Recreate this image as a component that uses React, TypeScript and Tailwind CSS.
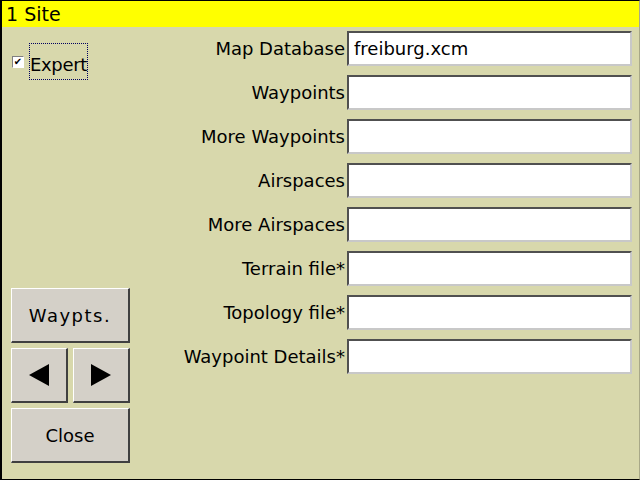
import React from "react"

const font = { fontFamily: '"DejaVu Sans", sans-serif' }

const fields = [
  { label: "Map Database", value: "freiburg.xcm" },
  { label: "Waypoints", value: "" },
  { label: "More Waypoints", value: "" },
  { label: "Airspaces", value: "" },
  { label: "More Airspaces", value: "" },
  { label: "Terrain file*", value: "" },
  { label: "Topology file*", value: "" },
  { label: "Waypoint Details*", value: "" },
]

function Btn({ children, className = "" }: { children: React.ReactNode; className?: string }) {
  return (
    <div
      className={`flex items-center justify-center bg-[#d4d0c8] border-t border-l border-t-white border-l-white border-b-2 border-r-2 border-b-[#404040] border-r-[#404040] text-[18px] text-black ${className}`}
    >
      {children}
    </div>
  )
}

export default function App() {
  return (
    <div className="w-[640px] h-[480px] flex flex-col bg-[#d8d8ac] border-l-2 border-t border-b border-black border-r border-r-[#a8a888] overflow-hidden" style={font}>
      {/* Title */}
      <div className="h-[26px] bg-[#ffff00] flex items-center pl-[4px] text-[19px] text-black leading-none shrink-0">
        1 Site
      </div>

      <div className="flex flex-1">
        {/* Left column */}
        <div className="w-[140px] flex flex-col pl-[9px] pt-[16px] pb-[16px]">
          <div className="flex items-center">
            <div className="w-[12px] h-[12px] bg-white border border-t-[#808080] border-l-[#808080] border-b-white border-r-white flex items-center justify-center text-[10px] font-bold leading-none ml-[1px]">
              ✔
            </div>
            <div className="ml-[5px] h-[37px] w-[59px] pt-[6px] flex items-center justify-center border border-dotted border-[#000060] text-[18px] tracking-[-0.3px] text-black">
              Expert
            </div>
          </div>

          <div className="flex-1" />

          <div className="flex flex-col gap-[5px] w-[119px]">
            <Btn className="h-[55px] tracking-[1.5px]">Waypts.</Btn>
            <div className="flex gap-[5px]">
              <Btn className="h-[55px] flex-1">
                <svg width="22" height="22" viewBox="0 0 22 22">
                  <polygon points="1,11 21,0 21,22" fill="black" />
                </svg>
              </Btn>
              <Btn className="h-[55px] flex-1">
                <svg width="22" height="22" viewBox="0 0 22 22">
                  <polygon points="21,11 1,0 1,22" fill="black" />
                </svg>
              </Btn>
            </div>
            <Btn className="h-[55px]">Close</Btn>
          </div>
        </div>

        {/* Fields */}
        <div className="flex-1 flex flex-col gap-[9px] pt-[4px] pr-[7px]">
          {fields.map((f) => (
            <div key={f.label} className="flex items-center h-[35px]">
              <div className="flex-1 text-right text-[18px] text-black pr-[2px] whitespace-nowrap">{f.label}</div>
              <div className="w-[285px] h-[35px] bg-white border-t-2 border-l-2 border-t-[#505050] border-l-[#505050] border-b-2 border-r-2 border-b-[#c8c8c8] border-r-[#c8c8c8] flex items-center pl-[5px] text-[18px] text-black">
                {f.value}
              </div>
            </div>
          ))}
        </div>
      </div>
    </div>
  )
}
